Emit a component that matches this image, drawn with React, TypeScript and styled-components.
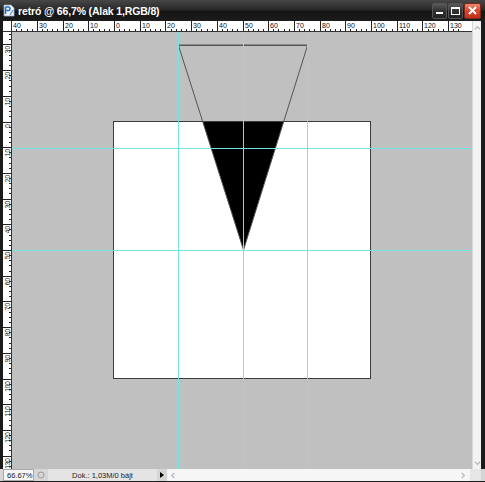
import React from "react";
import styled, { createGlobalStyle } from "styled-components";

const UNIT = 2.57; // px per ruler unit at 66,7%
const TOP_ZERO = 102; // x of 0 inside the top ruler
const LEFT_ZERO = 89.5; // y of 0 inside the left ruler

const GlobalStyle = createGlobalStyle`
  html, body {
    margin: 0;
    padding: 0;
    background: #1b1b1b;
  }
`;

const Window = styled.div`
  width: 485px;
  height: 482px;
  background: #1b1b1b;
  display: flex;
  flex-direction: column;
  font-family: "Liberation Sans", Arial, sans-serif;
  overflow: hidden;
`;

const TitleBar = styled.div`
  height: 21px;
  display: flex;
  align-items: center;
  padding: 0 4px 0 3px;
  background: linear-gradient(#474747 0%, #2a2a2a 45%, #141414 55%, #1c1c1c 100%);
`;

const Title = styled.span`
  margin-left: 3px;
  color: #fff;
  font-family: "Liberation Sans", Arial, sans-serif;
  font-weight: bold;
  font-size: 10.5px;
  letter-spacing: -0.15px;
  white-space: nowrap;
`;

const Buttons = styled.div`
  margin-left: auto;
  display: flex;
  gap: 1px;
`;

const WinButton = styled.div<{ $close?: boolean; $w: number }>`
  width: ${(p) => p.$w}px;
  height: 16px;
  box-sizing: border-box;
  border: 1px solid ${(p) => (p.$close ? "#7a2a1c" : "#555")};
  border-radius: 2px;
  background: ${(p) =>
    p.$close
      ? "linear-gradient(#ee8a72, #d8452c 50%, #c2301a)"
      : "linear-gradient(#5a5a5a, #303030 50%, #222)"};
  display: flex;
  align-items: center;
  justify-content: center;
`;

const Body = styled.div`
  flex: 1;
  display: grid;
  grid-template-columns: 9px 460px 9px;
  grid-template-rows: 11px 437px;
  padding: 0 4px 0 3px;
`;

const RulerCorner = styled.div`
  background: #fff;
  box-sizing: border-box;
  border-right: 1px solid #333;
  border-bottom: 1px solid #333;
`;

const RulerSvg = styled.svg`
  display: block;
  background: #fff;
  font-family: "Liberation Sans", Arial, sans-serif;
`;

const VScroll = styled.div`
  grid-column: 3;
  grid-row: 1 / span 2;
  background: #f3f3f3;
  border-left: 1px solid #d8d8d8;
  display: flex;
  flex-direction: column;
  justify-content: space-between;
  align-items: center;
  padding: 4px 0 2px;
`;

const Workspace = styled.div`
  position: relative;
  background: #c0c0c0;
  overflow: hidden;
  padding: 89px 0 0 101px;
  box-sizing: border-box;
`;

const Document = styled.div`
  width: 258px;
  height: 258px;
  box-sizing: border-box;
  background: #fff;
  border: 1px solid #3c3c3c;
`;

const Overlay = styled.svg`
  position: absolute;
  left: 0;
  top: 0;
`;

const StatusBar = styled.div`
  height: 12px;
  display: flex;
  align-items: stretch;
  padding: 0 4px 0 3px;
  margin-bottom: 1px;
  background: #d6d6d6;
  font-size: 7.5px;
  color: #222;
`;

const ZoomField = styled.div`
  width: 31px;
  box-sizing: border-box;
  background: #f6f6f6;
  border: 1px solid #a8a8a8;
  display: flex;
  align-items: center;
  padding-left: 3px;
`;

const IconCell = styled.div`
  width: 10px;
  margin-left: 2px;
  display: flex;
  align-items: center;
  justify-content: center;
`;

const DocInfo = styled.div`
  width: 109px;
  margin-left: 2px;
  background: #e4e4e4;
  display: flex;
  align-items: center;
  justify-content: center;
`;

const MenuArrow = styled.div`
  width: 9px;
  display: flex;
  align-items: center;
  justify-content: center;
  &::after {
    content: "";
    border-left: 4px solid #000;
    border-top: 3.5px solid transparent;
    border-bottom: 3.5px solid transparent;
  }
`;

const HScroll = styled.div`
  flex: 1;
  margin-left: 1px;
  background: #f6f6f6;
  display: flex;
  align-items: center;
  justify-content: space-between;
  padding: 0 3px;
`;

const ScrollCorner = styled.div`
  width: 11px;
  background: #e6e6e6;
`;

const Chevron = ({ dir }: { dir: "up" | "down" | "left" | "right" }) => {
  const d = {
    up: "M1 5 L4 2 L7 5",
    down: "M1 2 L4 5 L7 2",
    left: "M5 1 L2 4 L5 7",
    right: "M2 1 L5 4 L2 7",
  }[dir];
  return (
    <svg width="7" height="7" viewBox="0 0 8 8">
      <path d={d} fill="none" stroke="#a9b6c4" strokeWidth="1.3" />
    </svg>
  );
};

const PsIcon = () => (
  <svg width="12" height="13" viewBox="0 0 12 13">
    <path d="M1 1 H8 L11 4 V12 H1 Z" fill="#f4f6f8" stroke="#9aa9b8" strokeWidth="0.8" />
    <path d="M2.5 3 V10 M2.5 3 H5.5 Q7 3 7 4.8 Q7 6.5 5.5 6.5 H2.5" fill="none" stroke="#2a6fc0" strokeWidth="1.6" />
    <path d="M7 11 L10 6" stroke="#5a9de0" strokeWidth="1.4" />
  </svg>
);

const TopRuler = () => {
  const ticks: React.ReactNode[] = [];
  for (let u = -40; u <= 134; u += 2) {
    const x = Math.round(TOP_ZERO + u * UNIT) + 0.5;
    const major = u % 10 === 0;
    ticks.push(<line key={u} x1={x} x2={x} y1={major ? 0 : 8} y2={10} stroke="#222" strokeWidth="1" />);
    if (major) {
      ticks.push(
        <text key={"t" + u} x={x + 1.5} y={6.5} fontSize="7" fill="#111">
          {Math.abs(u)}
        </text>
      );
    }
  }
  return (
    <RulerSvg width="460" height="11" viewBox="0 0 460 11">
      {ticks}
      <line x1="0" x2="460" y1="10.5" y2="10.5" stroke="#333" />
    </RulerSvg>
  );
};

const LeftRuler = () => {
  const ticks: React.ReactNode[] = [];
  for (let u = -34; u <= 136; u += 2) {
    const y = Math.round(LEFT_ZERO + u * UNIT) + 0.5;
    const major = u % 10 === 0;
    ticks.push(<line key={u} x1={major ? 0 : 6} x2={8} y1={y} y2={y} stroke="#222" strokeWidth="1" />);
    if (major) {
      ticks.push(
        <text
          key={"t" + u}
          transform={`translate(6.5 ${y + 1.5}) rotate(-90)`}
          textAnchor="end"
          fontSize="6.5"
          fill="#111"
        >
          {Math.abs(u)}
        </text>
      );
    }
  }
  return (
    <RulerSvg width="9" height="437" viewBox="0 0 9 437">
      {ticks}
      <line x1="8.5" x2="8.5" y1="0" y2="437" stroke="#333" />
    </RulerSvg>
  );
};

const guidesX = [166, 231, 295];
const guidesY = [116, 218];
const GUIDE = "#72e6e6";

const Artwork = () => (
  <Overlay width="460" height="437" viewBox="0 0 460 437">
    <defs>
      <clipPath id="doc">
        <rect x="102" y="90" width="256" height="256" />
      </clipPath>
    </defs>
    <polygon points="166.5,13.5 295.5,13.5 231.5,218" fill="#000" clipPath="url(#doc)" />
    <polygon points="166.5,13.5 295.5,13.5 231.5,218" fill="none" stroke="#555" strokeWidth="1" />
    <line x1="166.5" x2="295.5" y1="12.5" y2="12.5" stroke="#8c8c8c" />
    {guidesX.map((x) => (
      <rect key={"x" + x} x={x} y="0" width="1" height="437" fill={GUIDE} shapeRendering="crispEdges" />
    ))}
    {guidesY.map((y) => (
      <rect key={"y" + y} x="0" y={y} width="460" height="1" fill={GUIDE} shapeRendering="crispEdges" />
    ))}
  </Overlay>
);

export default function App() {
  return (
    <>
      <GlobalStyle />
      <Window>
        <TitleBar>
          <PsIcon />
          <Title>retró @ 66,7% (Alak 1,RGB/8)</Title>
          <Buttons>
            <WinButton $w={15}>
              <svg width="7" height="8" viewBox="0 0 7 8">
                <rect x="0" y="5" width="7" height="2" fill="#fff" />
              </svg>
            </WinButton>
            <WinButton $w={15}>
              <svg width="9" height="8" viewBox="0 0 9 8">
                <rect x="0.5" y="0.5" width="8" height="7" fill="none" stroke="#fff" />
                <rect x="0.5" y="0.5" width="8" height="1.5" fill="#fff" />
              </svg>
            </WinButton>
            <WinButton $w={17} $close>
              <svg width="9" height="9" viewBox="0 0 9 9">
                <path d="M1 1 L8 8 M8 1 L1 8" stroke="#fff" strokeWidth="2" />
              </svg>
            </WinButton>
          </Buttons>
        </TitleBar>
        <Body>
          <RulerCorner />
          <TopRuler />
          <VScroll>
            <Chevron dir="up" />
            <Chevron dir="down" />
          </VScroll>
          <LeftRuler />
          <Workspace>
            <Document />
            <Artwork />
          </Workspace>
        </Body>
        <StatusBar>
          <ZoomField>66.67%</ZoomField>
          <IconCell>
            <svg width="8" height="8" viewBox="0 0 8 8">
              <circle cx="4" cy="4" r="3" fill="none" stroke="#9a9a9a" />
            </svg>
          </IconCell>
          <DocInfo>Dok.: 1,03M/0 bájt</DocInfo>
          <MenuArrow />
          <HScroll>
            <Chevron dir="left" />
            <Chevron dir="right" />
          </HScroll>
          <ScrollCorner />
        </StatusBar>
      </Window>
    </>
  );
}
